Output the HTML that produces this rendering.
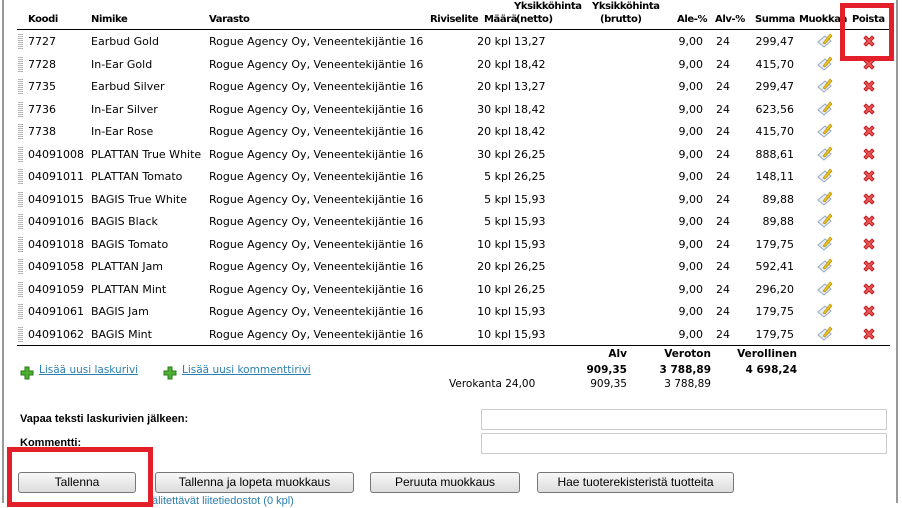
<!DOCTYPE html>
<html><head><meta charset="utf-8"><style>
*{margin:0;padding:0;box-sizing:border-box}
body{width:902px;height:503px;background:#fff;position:relative;overflow:hidden;font-family:Verdana,"DejaVu Sans",sans-serif;font-size:11px;color:#000}
.a{position:absolute;white-space:nowrap;line-height:14px}
.b{font-weight:bold}
.r{text-align:right}
.h{font-weight:bold;font-size:10px;letter-spacing:-0.4px}
.grip{position:absolute;width:5px;height:15px;background:repeating-linear-gradient(#bbb 0 1px,#fff 1px 2px);border-left:1px dotted #aaa;border-right:1px dotted #aaa}
.btn{position:absolute;top:472px;height:21px;border:1px solid #777;border-radius:3px;background:linear-gradient(#f8f8f8,#dcdcdc);font-family:"Liberation Sans",sans-serif;font-size:12px;text-align:center;line-height:19px}
.inp{position:absolute;left:481px;width:406px;height:21px;border:1px solid #ccc;background:#fff}
.lbl{position:absolute;left:20px;font-family:"Liberation Sans",sans-serif;font-weight:bold;font-size:11px}
.red{position:absolute;border:5px solid #e3202a}
a{color:#2a7fb0;text-decoration:underline}
.s{font-size:10.5px}
</style></head><body>
<div style="position:absolute;left:2px;top:0;width:2px;height:503px;background:#999"></div>
<div style="position:absolute;left:896px;top:0;width:2px;height:503px;background:#999"></div>

<div class="a h" style="left:514px;top:0">Yksikköhinta</div>
<div class="a h" style="left:592px;top:0">Yksikköhinta</div>
<div class="a h" style="left:28px;top:13px">Koodi</div>
<div class="a h" style="left:91px;top:13px">Nimike</div>
<div class="a h" style="left:209px;top:13px">Varasto</div>
<div class="a h" style="left:430px;top:13px">Riviselite</div>
<div class="a h" style="left:484px;top:13px">Määrä</div>
<div class="a h" style="left:516px;top:13px">(netto)</div>
<div class="a h" style="left:600px;top:13px">(brutto)</div>
<div class="a h" style="left:677px;top:13px">Ale-%</div>
<div class="a h" style="left:715px;top:13px">Alv-%</div>
<div class="a h" style="left:755px;top:13px">Summa</div>
<div class="a h" style="left:799px;top:13px">Muokkaa</div>
<div class="a h" style="left:850px;top:13px;background:#fff;padding-left:2px">Poista</div>
<div style="position:absolute;left:17px;top:29px;width:873px;height:1px;background:#000"></div>
<div style="position:absolute;left:17px;top:345px;width:873px;height:1px;background:#000"></div>

<svg width="0" height="0" style="position:absolute"><defs>
<g id="ed"><path d="M1 9 L7 14 L14 8 L8 3 Z" fill="#e8eef6" stroke="#9ab" stroke-width="1"/><path d="M6 10 L13 1 L15 3 L8 11 Z" fill="#f0c020" stroke="#a80" stroke-width=".6"/></g>
<g id="dx"><path d="M2 4 L4 2 L7 5 L10 2 L12 4 L9 7 L12 10 L10 12 L7 9 L4 12 L2 10 L5 7 Z" fill="#e85858" stroke="#c02020" stroke-width="1" stroke-linejoin="round"/></g>
<g id="pl"><path d="M5 1 H9 V5 H13 V9 H9 V13 H5 V9 H1 V5 H5 Z" fill="#4cb030" stroke="#2a7a18" stroke-width="1"/></g>
</defs></svg>

<div class="grip" style="left:18px;top:34px"></div><div class="a" style="left:28px;top:35px">7727</div><div class="a" style="left:91px;top:35px">Earbud Gold</div><div class="a" style="left:209px;top:35px">Rogue Agency Oy, Veneentekijäntie 16</div><div class="a r" style="left:450px;width:61px;top:35px">20 kpl</div><div class="a" style="left:514px;top:35px">13,27</div><div class="a r" style="left:650px;width:53px;top:35px">9,00</div><div class="a" style="left:716px;top:35px">24</div><div class="a r" style="left:730px;width:64px;top:35px">299,47</div><svg class="a" style="left:817px;top:33px" width="16" height="16"><use href="#ed"/></svg><svg class="a" style="left:862px;top:34px" width="14" height="14"><use href="#dx"/></svg>
<div class="grip" style="left:18px;top:56.5px"></div><div class="a" style="left:28px;top:57.5px">7728</div><div class="a" style="left:91px;top:57.5px">In-Ear Gold</div><div class="a" style="left:209px;top:57.5px">Rogue Agency Oy, Veneentekijäntie 16</div><div class="a r" style="left:450px;width:61px;top:57.5px">20 kpl</div><div class="a" style="left:514px;top:57.5px">18,42</div><div class="a r" style="left:650px;width:53px;top:57.5px">9,00</div><div class="a" style="left:716px;top:57.5px">24</div><div class="a r" style="left:730px;width:64px;top:57.5px">415,70</div><svg class="a" style="left:817px;top:55.5px" width="16" height="16"><use href="#ed"/></svg><svg class="a" style="left:862px;top:56.5px" width="14" height="14"><use href="#dx"/></svg>
<div class="grip" style="left:18px;top:79px"></div><div class="a" style="left:28px;top:80px">7735</div><div class="a" style="left:91px;top:80px">Earbud Silver</div><div class="a" style="left:209px;top:80px">Rogue Agency Oy, Veneentekijäntie 16</div><div class="a r" style="left:450px;width:61px;top:80px">20 kpl</div><div class="a" style="left:514px;top:80px">13,27</div><div class="a r" style="left:650px;width:53px;top:80px">9,00</div><div class="a" style="left:716px;top:80px">24</div><div class="a r" style="left:730px;width:64px;top:80px">299,47</div><svg class="a" style="left:817px;top:78px" width="16" height="16"><use href="#ed"/></svg><svg class="a" style="left:862px;top:79px" width="14" height="14"><use href="#dx"/></svg>
<div class="grip" style="left:18px;top:101.5px"></div><div class="a" style="left:28px;top:102.5px">7736</div><div class="a" style="left:91px;top:102.5px">In-Ear Silver</div><div class="a" style="left:209px;top:102.5px">Rogue Agency Oy, Veneentekijäntie 16</div><div class="a r" style="left:450px;width:61px;top:102.5px">30 kpl</div><div class="a" style="left:514px;top:102.5px">18,42</div><div class="a r" style="left:650px;width:53px;top:102.5px">9,00</div><div class="a" style="left:716px;top:102.5px">24</div><div class="a r" style="left:730px;width:64px;top:102.5px">623,56</div><svg class="a" style="left:817px;top:100.5px" width="16" height="16"><use href="#ed"/></svg><svg class="a" style="left:862px;top:101.5px" width="14" height="14"><use href="#dx"/></svg>
<div class="grip" style="left:18px;top:124px"></div><div class="a" style="left:28px;top:125px">7738</div><div class="a" style="left:91px;top:125px">In-Ear Rose</div><div class="a" style="left:209px;top:125px">Rogue Agency Oy, Veneentekijäntie 16</div><div class="a r" style="left:450px;width:61px;top:125px">20 kpl</div><div class="a" style="left:514px;top:125px">18,42</div><div class="a r" style="left:650px;width:53px;top:125px">9,00</div><div class="a" style="left:716px;top:125px">24</div><div class="a r" style="left:730px;width:64px;top:125px">415,70</div><svg class="a" style="left:817px;top:123px" width="16" height="16"><use href="#ed"/></svg><svg class="a" style="left:862px;top:124px" width="14" height="14"><use href="#dx"/></svg>
<div class="grip" style="left:18px;top:146.5px"></div><div class="a" style="left:28px;top:147.5px">04091008</div><div class="a" style="left:91px;top:147.5px">PLATTAN True White</div><div class="a" style="left:209px;top:147.5px">Rogue Agency Oy, Veneentekijäntie 16</div><div class="a r" style="left:450px;width:61px;top:147.5px">30 kpl</div><div class="a" style="left:514px;top:147.5px">26,25</div><div class="a r" style="left:650px;width:53px;top:147.5px">9,00</div><div class="a" style="left:716px;top:147.5px">24</div><div class="a r" style="left:730px;width:64px;top:147.5px">888,61</div><svg class="a" style="left:817px;top:145.5px" width="16" height="16"><use href="#ed"/></svg><svg class="a" style="left:862px;top:146.5px" width="14" height="14"><use href="#dx"/></svg>
<div class="grip" style="left:18px;top:169px"></div><div class="a" style="left:28px;top:170px">04091011</div><div class="a" style="left:91px;top:170px">PLATTAN Tomato</div><div class="a" style="left:209px;top:170px">Rogue Agency Oy, Veneentekijäntie 16</div><div class="a r" style="left:450px;width:61px;top:170px">5 kpl</div><div class="a" style="left:514px;top:170px">26,25</div><div class="a r" style="left:650px;width:53px;top:170px">9,00</div><div class="a" style="left:716px;top:170px">24</div><div class="a r" style="left:730px;width:64px;top:170px">148,11</div><svg class="a" style="left:817px;top:168px" width="16" height="16"><use href="#ed"/></svg><svg class="a" style="left:862px;top:169px" width="14" height="14"><use href="#dx"/></svg>
<div class="grip" style="left:18px;top:191.5px"></div><div class="a" style="left:28px;top:192.5px">04091015</div><div class="a" style="left:91px;top:192.5px">BAGIS True White</div><div class="a" style="left:209px;top:192.5px">Rogue Agency Oy, Veneentekijäntie 16</div><div class="a r" style="left:450px;width:61px;top:192.5px">5 kpl</div><div class="a" style="left:514px;top:192.5px">15,93</div><div class="a r" style="left:650px;width:53px;top:192.5px">9,00</div><div class="a" style="left:716px;top:192.5px">24</div><div class="a r" style="left:730px;width:64px;top:192.5px">89,88</div><svg class="a" style="left:817px;top:190.5px" width="16" height="16"><use href="#ed"/></svg><svg class="a" style="left:862px;top:191.5px" width="14" height="14"><use href="#dx"/></svg>
<div class="grip" style="left:18px;top:214px"></div><div class="a" style="left:28px;top:215px">04091016</div><div class="a" style="left:91px;top:215px">BAGIS Black</div><div class="a" style="left:209px;top:215px">Rogue Agency Oy, Veneentekijäntie 16</div><div class="a r" style="left:450px;width:61px;top:215px">5 kpl</div><div class="a" style="left:514px;top:215px">15,93</div><div class="a r" style="left:650px;width:53px;top:215px">9,00</div><div class="a" style="left:716px;top:215px">24</div><div class="a r" style="left:730px;width:64px;top:215px">89,88</div><svg class="a" style="left:817px;top:213px" width="16" height="16"><use href="#ed"/></svg><svg class="a" style="left:862px;top:214px" width="14" height="14"><use href="#dx"/></svg>
<div class="grip" style="left:18px;top:236.5px"></div><div class="a" style="left:28px;top:237.5px">04091018</div><div class="a" style="left:91px;top:237.5px">BAGIS Tomato</div><div class="a" style="left:209px;top:237.5px">Rogue Agency Oy, Veneentekijäntie 16</div><div class="a r" style="left:450px;width:61px;top:237.5px">10 kpl</div><div class="a" style="left:514px;top:237.5px">15,93</div><div class="a r" style="left:650px;width:53px;top:237.5px">9,00</div><div class="a" style="left:716px;top:237.5px">24</div><div class="a r" style="left:730px;width:64px;top:237.5px">179,75</div><svg class="a" style="left:817px;top:235.5px" width="16" height="16"><use href="#ed"/></svg><svg class="a" style="left:862px;top:236.5px" width="14" height="14"><use href="#dx"/></svg>
<div class="grip" style="left:18px;top:259px"></div><div class="a" style="left:28px;top:260px">04091058</div><div class="a" style="left:91px;top:260px">PLATTAN Jam</div><div class="a" style="left:209px;top:260px">Rogue Agency Oy, Veneentekijäntie 16</div><div class="a r" style="left:450px;width:61px;top:260px">20 kpl</div><div class="a" style="left:514px;top:260px">26,25</div><div class="a r" style="left:650px;width:53px;top:260px">9,00</div><div class="a" style="left:716px;top:260px">24</div><div class="a r" style="left:730px;width:64px;top:260px">592,41</div><svg class="a" style="left:817px;top:258px" width="16" height="16"><use href="#ed"/></svg><svg class="a" style="left:862px;top:259px" width="14" height="14"><use href="#dx"/></svg>
<div class="grip" style="left:18px;top:281.5px"></div><div class="a" style="left:28px;top:282.5px">04091059</div><div class="a" style="left:91px;top:282.5px">PLATTAN Mint</div><div class="a" style="left:209px;top:282.5px">Rogue Agency Oy, Veneentekijäntie 16</div><div class="a r" style="left:450px;width:61px;top:282.5px">10 kpl</div><div class="a" style="left:514px;top:282.5px">26,25</div><div class="a r" style="left:650px;width:53px;top:282.5px">9,00</div><div class="a" style="left:716px;top:282.5px">24</div><div class="a r" style="left:730px;width:64px;top:282.5px">296,20</div><svg class="a" style="left:817px;top:280.5px" width="16" height="16"><use href="#ed"/></svg><svg class="a" style="left:862px;top:281.5px" width="14" height="14"><use href="#dx"/></svg>
<div class="grip" style="left:18px;top:304px"></div><div class="a" style="left:28px;top:305px">04091061</div><div class="a" style="left:91px;top:305px">BAGIS Jam</div><div class="a" style="left:209px;top:305px">Rogue Agency Oy, Veneentekijäntie 16</div><div class="a r" style="left:450px;width:61px;top:305px">10 kpl</div><div class="a" style="left:514px;top:305px">15,93</div><div class="a r" style="left:650px;width:53px;top:305px">9,00</div><div class="a" style="left:716px;top:305px">24</div><div class="a r" style="left:730px;width:64px;top:305px">179,75</div><svg class="a" style="left:817px;top:303px" width="16" height="16"><use href="#ed"/></svg><svg class="a" style="left:862px;top:304px" width="14" height="14"><use href="#dx"/></svg>
<div class="grip" style="left:18px;top:326.5px"></div><div class="a" style="left:28px;top:327.5px">04091062</div><div class="a" style="left:91px;top:327.5px">BAGIS Mint</div><div class="a" style="left:209px;top:327.5px">Rogue Agency Oy, Veneentekijäntie 16</div><div class="a r" style="left:450px;width:61px;top:327.5px">10 kpl</div><div class="a" style="left:514px;top:327.5px">15,93</div><div class="a r" style="left:650px;width:53px;top:327.5px">9,00</div><div class="a" style="left:716px;top:327.5px">24</div><div class="a r" style="left:730px;width:64px;top:327.5px">179,75</div><svg class="a" style="left:817px;top:325.5px" width="16" height="16"><use href="#ed"/></svg><svg class="a" style="left:862px;top:326.5px" width="14" height="14"><use href="#dx"/></svg>

<svg class="a" style="left:20px;top:366px" width="14" height="14"><use href="#pl"/></svg>
<div class="a" style="left:39px;top:363px;font-size:10.5px"><a>Lisää uusi laskurivi</a></div>
<svg class="a" style="left:163px;top:366px" width="14" height="14"><use href="#pl"/></svg>
<div class="a" style="left:182px;top:363px;font-size:10.5px"><a>Lisää uusi kommenttirivi</a></div>

<div class="a b r s" style="left:560px;width:67px;top:347px">Alv</div>
<div class="a b r s" style="left:630px;width:81px;top:347px">Veroton</div>
<div class="a b r s" style="left:710px;width:87px;top:347px">Verollinen</div>
<div class="a b r s" style="left:560px;width:67px;top:363px">909,35</div>
<div class="a b r s" style="left:630px;width:81px;top:363px">3 788,89</div>
<div class="a b r s" style="left:710px;width:87px;top:363px">4 698,24</div>
<div class="a s" style="left:449px;top:377px">Verokanta 24,00</div>
<div class="a r s" style="left:560px;width:67px;top:377px">909,35</div>
<div class="a r s" style="left:630px;width:81px;top:377px">3 788,89</div>

<div class="lbl" style="top:413px">Vapaa teksti laskurivien jälkeen:</div>
<div class="lbl" style="top:437px">Kommentti:</div>
<div class="inp" style="top:409px"></div>
<div class="inp" style="top:433px"></div>

<div class="btn" style="left:18px;width:118px">Tallenna</div>
<div class="btn" style="left:155px;width:199px">Tallenna ja lopeta muokkaus</div>
<div class="btn" style="left:370px;width:150px">Peruuta muokkaus</div>
<div class="btn" style="left:537px;width:197px">Hae tuoterekisteristä tuotteita</div>
<div class="a" style="left:152px;top:494px;font-family:'Liberation Sans',sans-serif;font-size:11px;color:#2a7fb0">älitettävät liitetiedostot (0 kpl)</div>

<div class="red" style="left:840px;top:3px;width:54px;height:58px"></div>
<div class="red" style="left:7px;top:447px;width:146px;height:60px"></div>
</body></html>
